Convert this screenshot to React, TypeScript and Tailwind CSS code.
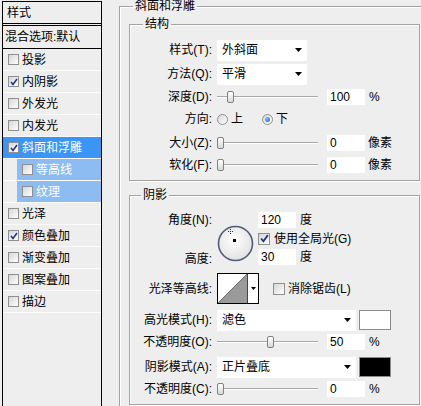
import React from "react";

function Check({ on, size = 11 }: { on?: boolean; size?: number }) {
  return (
    <span
      className="shrink-0 border border-[#8e8f8f] bg-gradient-to-br from-[#d6d6d6] to-white flex items-center justify-center"
      style={{ width: size, height: size }}
    >
      {on && (
        <svg width={size - 3} height={size - 3} viewBox="0 0 8 8">
          <path d="M1 4 L3 6.5 L7 1" fill="none" stroke="#23348f" strokeWidth="1.6" />
        </svg>
      )}
    </span>
  );
}

function Radio({ on }: { on?: boolean }) {
  return (
    <span className="shrink-0 w-[11px] h-[11px] rounded-full border border-[#8e8f8f] bg-gradient-to-br from-[#d8d8d8] to-white flex items-center justify-center">
      {on && <span className="w-[5px] h-[5px] rounded-full bg-[radial-gradient(circle_at_35%_35%,#7fc0ff,#1b5fc4)]" />}
    </span>
  );
}

function Arrow() {
  return (
    <svg width="7" height="4" viewBox="0 0 7 4" className="shrink-0">
      <path d="M0 0 H7 L3.5 4 Z" fill="#000" />
    </svg>
  );
}

function Dropdown({ text, w }: { text: string; w: number }) {
  return (
    <div className="h-[21px] bg-white flex items-center pl-[5px] pr-[5px] justify-between" style={{ width: w }}>
      <span>{text}</span>
      <Arrow />
    </div>
  );
}

function Slider({ pos }: { pos: number }) {
  return (
    <div className="relative w-[101px] h-[16px] flex items-center shrink-0">
      <div className="w-full h-[2px] border-t border-[#a9a9a9] border-b border-b-white" />
      <div
        className="absolute top-[2px] w-[7px] h-[12px] rounded-[2px] border border-[#808080] bg-gradient-to-b from-white to-[#d9d9d9]"
        style={{ left: pos }}
      />
    </div>
  );
}

function Num({ v }: { v: string }) {
  return <div className="w-[38px] h-[16px] bg-white pl-[3px] flex items-center shrink-0">{v}</div>;
}

function Label({ children }: { children: React.ReactNode }) {
  return <div className="w-[82px] shrink-0 text-right">{children}</div>;
}

function ListRow({ text, on, sel, sub }: { text: string; on?: boolean; sel?: boolean; sub?: boolean }) {
  if (sub) {
    return (
      <div className="h-[22px] flex border-b border-white">
        <div className="w-[14px] bg-[#eeeeee]" />
        <div className="flex-1 bg-[#8cbcf1] flex items-center pl-[5px] gap-[3px] text-white">
          <Check on={on} />
          <span>{text}</span>
        </div>
      </div>
    );
  }
  return (
    <div
      className={
        sel
          ? "h-[22px] flex items-center pl-[5px] gap-[3px] border-b border-white bg-[#3b95f7] text-white"
          : "h-[22px] flex items-center pl-[5px] gap-[3px] border-b border-[#fbfbfb]"
      }
    >
      <Check on={on} />
      <span>{text}</span>
    </div>
  );
}

const groupBox = "border border-[#a3a3a3] shadow-[inset_1px_1px_0_#fff,1px_1px_0_#fff] p-0 m-0";

export default function App() {
  return (
    <div className="w-[421px] h-[406px] overflow-hidden bg-[#eeeeee] flex text-[12px] leading-none text-black font-['Liberation_Sans','Noto_Sans_CJK_SC',sans-serif]">
      {/* style list */}
      <div className="ml-[2px] mt-[1px] w-[100px] h-[420px] shrink-0 border-x border-t border-black flex flex-col">
        <div className="h-[22px] border-b border-black pl-[4px] flex items-center">样式</div>
        <div className="mt-[1px] h-[24px] border-y border-black pl-[2px] flex items-center">混合选项:默认</div>
        <ListRow text="投影" />
        <ListRow text="内阴影" on />
        <ListRow text="外发光" />
        <ListRow text="内发光" />
        <ListRow text="斜面和浮雕" on sel />
        <ListRow text="等高线" sub />
        <ListRow text="纹理" sub />
        <ListRow text="光泽" />
        <ListRow text="颜色叠加" on />
        <ListRow text="渐变叠加" />
        <ListRow text="图案叠加" />
        <ListRow text="描边" />
      </div>

      {/* settings */}
      <div className="ml-[17px] shrink-0">
        <fieldset className={groupBox + " w-[320px] h-[430px]"}>
          <legend className="ml-[13px] px-[2px] leading-[12px] text-[12px]">斜面和浮雕</legend>

          <fieldset className={groupBox + " ml-[9px] mt-[5px] w-[291px] h-[164px]"}>
            <legend className="ml-[13px] px-[2px] leading-[14px]">结构</legend>
            <div className="flex flex-col">
              <div className="mt-[8px] h-[22px] flex items-center">
                <Label>样式(T):</Label>
                <div className="ml-[5px]"><Dropdown text="外斜面" w={90} /></div>
              </div>
              <div className="mt-[2px] h-[22px] flex items-center">
                <Label>方法(Q):</Label>
                <div className="ml-[5px]"><Dropdown text="平滑" w={90} /></div>
              </div>
              <div className="mt-[1px] h-[22px] flex items-center">
                <Label>深度(D):</Label>
                <div className="ml-[5px] flex items-center">
                  <Slider pos={10} />
                  <div className="ml-[9px]"><Num v="100" /></div>
                  <span className="ml-[4px]">%</span>
                </div>
              </div>
              <div className="h-[22px] flex items-center">
                <Label>方向:</Label>
                <div className="ml-[5px] flex items-center">
                  <Radio />
                  <span className="ml-[3px]">上</span>
                  <span className="ml-[19px]"><Radio on /></span>
                  <span className="ml-[3px]">下</span>
                </div>
              </div>
              <div className="mt-[2px] h-[22px] flex items-center">
                <Label>大小(Z):</Label>
                <div className="ml-[5px] flex items-center">
                  <Slider pos={0} />
                  <div className="ml-[9px]"><Num v="0" /></div>
                  <span className="ml-[3px]">像素</span>
                </div>
              </div>
              <div className="h-[22px] flex items-center">
                <Label>软化(F):</Label>
                <div className="ml-[5px] flex items-center">
                  <Slider pos={0} />
                  <div className="ml-[9px]"><Num v="0" /></div>
                  <span className="ml-[3px]">像素</span>
                </div>
              </div>
            </div>
          </fieldset>

          <fieldset className={groupBox + " ml-[9px] mt-[7px] w-[291px] h-[217px]"}>
            <legend className="ml-[11px] px-[2px] leading-[14px]">阴影</legend>
            <div className="flex flex-col">
              {/* angle + altitude */}
              <div className="mt-[10px] flex">
                <div className="w-[82px] h-[55px] flex flex-col justify-between text-right">
                  <div className="h-[16px] flex items-center justify-end">角度(N):</div>
                  <div className="h-[16px] flex items-center justify-end">高度:</div>
                </div>
                <div className="ml-[5px] mt-[13px] w-[36px]">
                  <svg width="37" height="37" viewBox="0 0 37 37">
                    <defs>
                      <radialGradient id="dial" cx="45%" cy="40%" r="60%">
                        <stop offset="0%" stopColor="#ffffff" />
                        <stop offset="100%" stopColor="#e2e2e2" />
                      </radialGradient>
                    </defs>
                    <circle cx="18.5" cy="18.5" r="17" fill="url(#dial)" stroke="#4f5b78" strokeWidth="1.6" />
                    <path d="M13.5 4 V9 M11 6.5 H16" stroke="#333" strokeWidth="1" strokeDasharray="1 1" />
                    <rect x="16" y="14" width="3" height="3" fill="#000" />
                  </svg>
                </div>
                <div className="ml-[5px] flex flex-col">
                  <div className="flex items-center">
                    <Num v="120" />
                    <span className="ml-[4px]">度</span>
                  </div>
                  <div className="mt-[4px] h-[13px] flex items-center gap-[4px]">
                    <Check on size={12} />
                    <span>使用全局光(G)</span>
                  </div>
                  <div className="mt-[4px] flex items-center">
                    <Num v="30" />
                    <span className="ml-[4px]">度</span>
                  </div>
                </div>
              </div>

              {/* gloss contour */}
              <div className="mt-[6px] h-[31px] flex items-center">
                <Label>光泽等高线:</Label>
                <div className="ml-[5px] w-[42px] h-[31px] border border-black bg-white flex">
                  <svg width="29" height="29" viewBox="0 0 29 29" className="shrink-0">
                    <path d="M0 29 L29 0 V29 Z" fill="#9a9a9a" />
                    <path d="M0 29 L29 0" stroke="#6f6f6f" strokeWidth="1" />
                  </svg>
                  <div className="flex-1 border-l border-[#444] flex items-center justify-center">
                    <svg width="5" height="3" viewBox="0 0 5 3"><path d="M0 0 H5 L2.5 3 Z" fill="#000" /></svg>
                  </div>
                </div>
                <div className="ml-[14px] flex items-center gap-[3px]">
                  <Check size={12} />
                  <span>消除锯齿(L)</span>
                </div>
              </div>

              <div className="mt-[5px] h-[22px] flex items-center">
                <Label>高光模式(H):</Label>
                <div className="ml-[5px]"><Dropdown text="滤色" w={139} /></div>
                <div className="ml-[3px] w-[32px] h-[20px] border border-[#8c8c8c] bg-white" />
              </div>
              <div className="h-[22px] flex items-center">
                <Label>不透明度(O):</Label>
                <div className="ml-[5px] flex items-center">
                  <Slider pos={50} />
                  <div className="ml-[9px]"><Num v="50" /></div>
                  <span className="ml-[4px]">%</span>
                </div>
              </div>
              <div className="mt-[3px] h-[22px] flex items-center">
                <Label>阴影模式(A):</Label>
                <div className="ml-[5px]"><Dropdown text="正片叠底" w={139} /></div>
                <div className="ml-[3px] w-[32px] h-[20px] border border-[#8c8c8c] bg-black" />
              </div>
              <div className="h-[22px] flex items-center">
                <Label>不透明度(C):</Label>
                <div className="ml-[5px] flex items-center">
                  <Slider pos={0} />
                  <div className="ml-[9px]"><Num v="0" /></div>
                  <span className="ml-[4px]">%</span>
                </div>
              </div>
            </div>
          </fieldset>
        </fieldset>
      </div>
    </div>
  );
}
